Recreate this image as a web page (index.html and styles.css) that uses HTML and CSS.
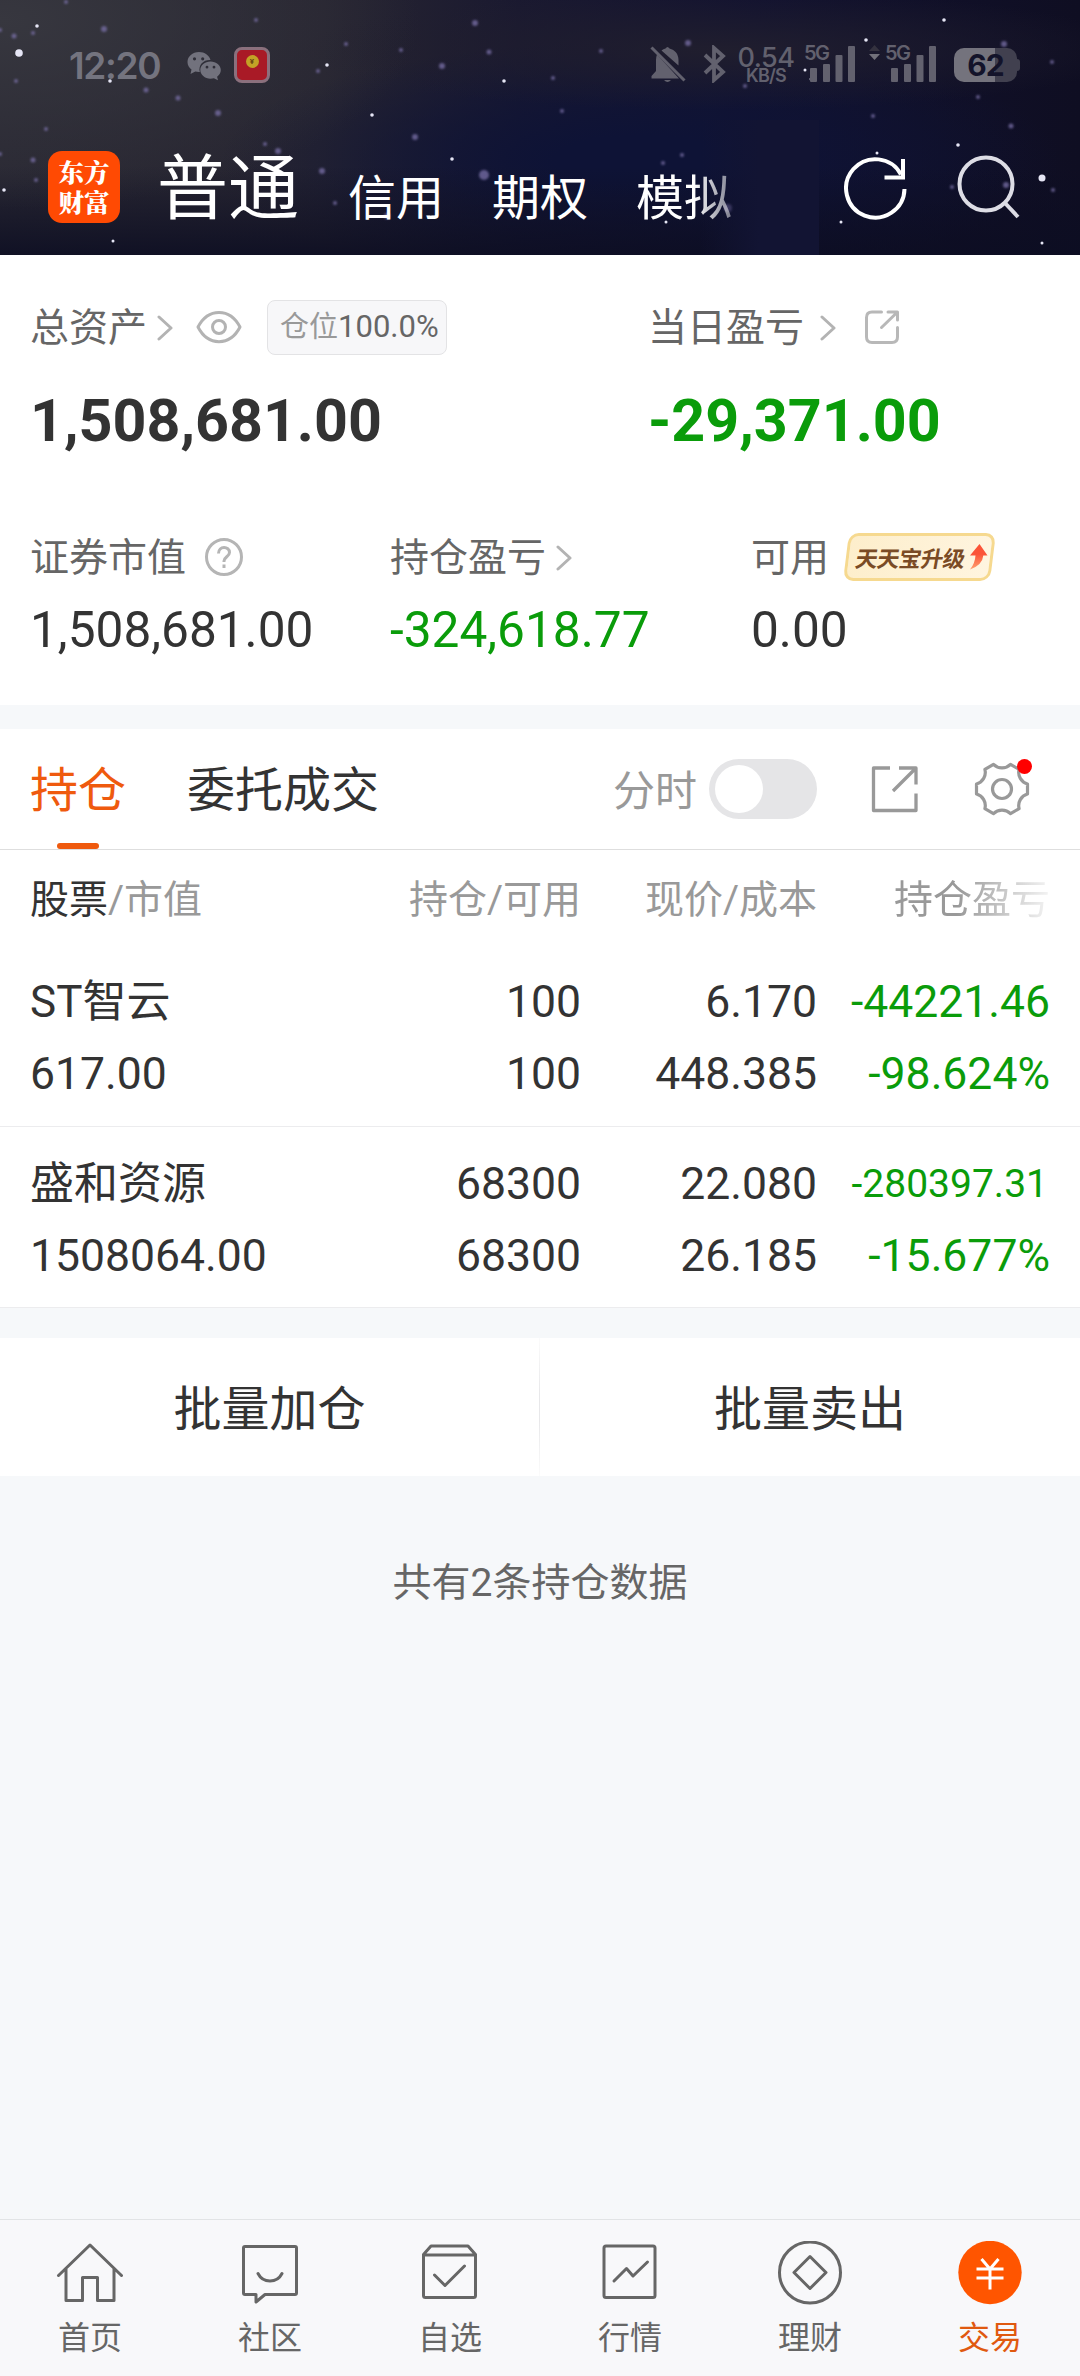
FILE: index.html
```html
<!DOCTYPE html>
<html lang="zh-CN">
<head>
<meta charset="utf-8">
<title>交易</title>
<link rel="stylesheet" href="styles.css">
</head>
<body>
<div class="app">
  <header class="header">
    <svg class="sky" viewBox="0 0 1080 255" aria-hidden="true">
      <defs>
        <linearGradient id="fade" x1="0" x2="1"><stop offset="0" stop-color="#121433" stop-opacity="0"/><stop offset=".5" stop-color="#121433"/></linearGradient>
        <filter id="soft"><feGaussianBlur stdDeviation="1"/></filter>
      </defs>
      <g fill="#e6e6f5">
        <circle cx="19" cy="53" r="3.800"/><circle cx="37" cy="26" r="1.800"/><circle cx="110" cy="81" r="1.800"/><circle cx="327" cy="65" r="1.800"/>
        <circle cx="372" cy="115" r="1.800"/><circle cx="504" cy="81" r="1.800"/><circle cx="452" cy="159" r="1.800"/><circle cx="4" cy="190" r="1.800"/>
        <circle cx="944" cy="20" r="1.800"/><circle cx="866" cy="40" r="1.800"/><circle cx="805" cy="70" r="1.500"/><circle cx="811" cy="79" r="1.500"/>
        <circle cx="958" cy="145" r="1.800"/><circle cx="841" cy="222" r="1.500"/><circle cx="1042" cy="178" r="3.500"/><circle cx="1042" cy="243" r="1.500"/>
        <circle cx="877" cy="153" r="1.500"/><circle cx="666" cy="222" r="1.500"/><circle cx="113" cy="241" r="1.500"/>
      </g>
      <g fill="#7a70a8" fill-opacity=".75" filter="url(#soft)">
        <circle cx="104" cy="29" r="3"/><circle cx="14" cy="36" r="2.500"/><circle cx="33" cy="33" r="2"/><circle cx="16" cy="81" r="2"/>
        <circle cx="146" cy="90" r="2.500"/><circle cx="178" cy="98" r="2.500"/><circle cx="218" cy="113" r="3"/><circle cx="46" cy="129" r="2"/>
        <circle cx="33" cy="160" r="2.500"/><circle cx="36" cy="180" r="2"/><circle cx="278" cy="151" r="3"/><circle cx="265" cy="144" r="2"/>
        <circle cx="346" cy="44" r="2"/><circle cx="401" cy="50" r="2"/><circle cx="442" cy="66" r="3"/><circle cx="475" cy="23" r="3"/>
        <circle cx="489" cy="52" r="2.500"/><circle cx="484" cy="175" r="5"/><circle cx="415" cy="137" r="3"/><circle cx="322" cy="171" r="3"/>
        <circle cx="335" cy="203" r="2"/><circle cx="66" cy="2" r="2"/><circle cx="256" cy="20" r="2"/><circle cx="318" cy="71" r="2"/>
        <circle cx="688" cy="43" r="3"/><circle cx="601" cy="51" r="2"/><circle cx="553" cy="78" r="2"/><circle cx="745" cy="86" r="2"/>
        <circle cx="562" cy="111" r="2"/><circle cx="682" cy="155" r="2"/><circle cx="663" cy="163" r="2"/><circle cx="728" cy="208" r="4"/>
        <circle cx="1004" cy="44" r="3"/><circle cx="978" cy="97" r="2"/><circle cx="1011" cy="126" r="2.500"/><circle cx="873" cy="116" r="2"/>
        <circle cx="1006" cy="185" r="3"/><circle cx="1053" cy="190" r="2"/><circle cx="952" cy="187" r="2"/><circle cx="1052" cy="62" r="2"/>
        <circle cx="0" cy="154" r="2"/><circle cx="0" cy="30" r="2"/><circle cx="387" cy="216" r="3"/>
      </g>
      <rect x="700" y="120" width="119" height="135" fill="url(#fade)"/>
    </svg>
    <div class="status">
      <span class="clock">12:20</span>
      <svg class="wechat" width="34" height="30" viewBox="0 0 34 30"><path fill="#72727d" fill-rule="evenodd" d="M12 1C5.500 1 .5 5.500 .5 11c0 3 1.500 5.800 4 7.600L3.500 23l4.800-2.500c1.200.3 2.400.5 3.700.5h.8C11 13.500 17 8.500 23.500 9 22.300 4.300 17.600 1 12 1ZM7.500 6.200a1.600 1.600 0 1 1 0 3.200 1.600 1.600 0 0 1 0-3.200Zm8.200 0a1.600 1.600 0 1 1 0 3.200 1.600 1.600 0 0 1 0-3.200Z"/><path fill="#72727d" fill-rule="evenodd" d="M23.500 10.500c-5.700 0-10.200 3.800-10.200 8.600s4.500 8.600 10.200 8.600c1.200 0 2.300-.2 3.400-.5l4.100 2-.9-3.500c2.300-1.600 3.700-3.900 3.700-6.600 0-4.800-4.600-8.600-10.300-8.600Zm-3.500 4.300a1.400 1.400 0 1 1 0 2.800 1.400 1.400 0 0 1 0-2.800Zm7 0a1.400 1.400 0 1 1 0 2.800 1.400 1.400 0 0 1 0-2.800Z"/></svg>
      <span class="packet"><span class="coin">¥</span></span>
      <svg class="bell" width="36" height="36" viewBox="0 0 36 36"><path fill="#62616e" d="M15.500 2.500q2-3 4 0C25 4 28.500 8 28.500 14v5.500L11.500 4.500q1.800-1.400 4-2ZM7 8.500 29 32.500H1.500V30L6 25V14q0-3 1-5.500ZM14 34h7q-3.500 4-7 0Z"/><path stroke="#62616e" stroke-width="3" d="m1.500 1.500 33 33"/></svg>
      <svg class="bt" width="23" height="38" viewBox="0 0 23 38"><path fill="none" stroke="#62616e" stroke-width="3.800" d="m2 10 18 17-9 8V3l9 8L2 28"/></svg>
      <span class="speed"><b>0.54</b><i>KB/S</i></span>
      <span class="signal"><span class="g5">5G</span><svg width="46" height="38" viewBox="0 0 46 38"><g fill="#62616e"><rect x="0" y="23" width="7" height="14" rx="1"/><rect x="13" y="19" width="7" height="18" rx="1"/><rect x="25.500" y="10" width="7" height="27" rx="1"/><rect x="38" y="1" width="7" height="36" rx="1"/></g></svg></span>
      <svg class="updown" width="11" height="16" viewBox="0 0 11 16"><path fill="#34323f" d="m0 6 5.500-6L11 6z"/><path fill="#72717b" d="m0 9 5.500 6L11 9z"/></svg>
      <span class="signal second"><span class="g5">5G</span><svg width="46" height="38" viewBox="0 0 46 38"><g fill="#62616e"><rect x="0" y="23" width="7" height="14" rx="1"/><rect x="13" y="19" width="7" height="18" rx="1"/><rect x="25.500" y="10" width="7" height="27" rx="1"/><rect x="38" y="1" width="7" height="36" rx="1"/></g></svg></span>
      <span class="battery">62</span>
    </div>
    <nav class="nav">
      <span class="logo"><span>东方</span><span>财富</span></span>
      <span class="nav-main">普通</span>
      <span class="nav-item">信用</span>
      <span class="nav-item">期权</span>
      <span class="nav-item faded">模拟</span>
      <svg class="refresh" width="64" height="66" viewBox="0 0 64 66"><path fill="none" stroke="#fff" stroke-width="4" d="M60.500 34A29.200 29.200 0 1 1 57 19.500"/><path fill="none" stroke="#fff" stroke-width="4" d="M59 4v18.500H40.500"/></svg>
      <svg class="search" width="64" height="66" viewBox="0 0 64 66"><g fill="none" stroke="#dddde5" stroke-width="4"><circle cx="29" cy="29" r="26.500"/><path d="m48 48 13 14"/></g></svg>
    </nav>
  </header>

  <section class="summary">
    <div class="top-grid">
      <div>
        <div class="label">总资产
          <svg class="chev c1" width="16" height="26" viewBox="0 0 16 26"><path d="m2 2 12 11L2 24"/></svg>
          <svg class="eye" width="46" height="34" viewBox="0 0 46 34"><g fill="none" stroke="#b3b3b3" stroke-width="3"><path stroke-linejoin="round" d="M2 17C12-2.500 34-2.500 44 17 34 36.500 12 36.500 2 17Z"/><circle cx="23" cy="17" r="6.500"/></g></svg>
          <span class="position">仓位<em>100.0%</em></span>
        </div>
        <div class="big">1,508,681.00</div>
      </div>
      <div>
        <div class="label">当日盈亏
          <svg class="chev c2" width="16" height="26" viewBox="0 0 16 26"><path d="m2 2 12 11L2 24"/></svg>
          <svg class="share-sm" width="36" height="36" viewBox="0 0 36 36"><path fill="none" stroke="#b8b8b8" stroke-width="3" stroke-linecap="round" stroke-linejoin="round" d="M17.500 3H8Q2.500 3 2.500 8.500V28q0 5.500 5.500 5.500h20q5.500 0 5.500-5.500V18.500M24 3h9.500v8M33 3.500 17.500 18.500"/></svg>
        </div>
        <div class="big green">-29,371.00</div>
      </div>
    </div>
    <div class="sub-grid">
      <div>
        <div class="label">证券市值
          <svg class="help" width="40" height="40" viewBox="0 0 40 40"><g fill="none" stroke="#b5b5b5" stroke-width="3"><circle cx="20" cy="20" r="17.500"/><path d="M14.500 16.500c0-8 11-7.500 11-1 0 4-5.500 4.500-5.500 8.500v1M20 27.500v3.500"/></g></svg>
        </div>
        <div class="value">1,508,681.00</div>
      </div>
      <div>
        <div class="label">持仓盈亏
          <svg class="chev c3" width="16" height="26" viewBox="0 0 16 26"><path d="m2 2 12 11L2 24"/></svg>
        </div>
        <div class="value green">-324,618.77</div>
      </div>
      <div>
        <div class="label">可用
          <span class="promo"><span class="promo-text">天天宝升级</span><svg width="20" height="26" viewBox="0 0 20 26"><defs><linearGradient id="up" x1="0" x2="0" y1="0" y2="1"><stop offset=".4" stop-color="#fb5438"/><stop offset="1" stop-color="#ffa070"/></linearGradient></defs><path fill="url(#up)" d="m11.500 0 8 11.500h-4.200Q14.500 21 2 25.500 7 19.500 7.500 11.500H2Z"/></svg></span>
        </div>
        <div class="value">0.00</div>
      </div>
    </div>
  </section>

  <section class="holdings">
    <div class="tabs">
      <span class="tab active">持仓</span>
      <span class="tab">委托成交</span>
      <span class="minute">分时</span>
      <span class="toggle"><span class="knob"></span></span>
      <svg class="share" width="48" height="48" viewBox="0 0 48 48"><path fill="none" stroke="#999" stroke-width="3.300" stroke-linejoin="round" d="M19 3H2.500V45.500H45V28.500M28 3H45V19.500M44.500 3.500 22 26"/></svg>
      <span class="gear"><svg width="56" height="56" viewBox="-28 -28 56 56"><g fill="none" stroke="#999" stroke-width="3.200" stroke-linejoin="round"><path d="M25.500-5V5A12 12 0 0 0 17.100 19.600L8.500 24.600A12 12 0 0 0-8.500 24.600L-17.100 19.600A12 12 0 0 0-25.500 5V-5A12 12 0 0 0-17.100-19.600L-8.500-24.600A12 12 0 0 0 8.500-24.600L17.100-19.600A12 12 0 0 0 25.500-5Z"/><circle r="9.500"/></g></svg><span class="dot"></span></span>
    </div>
    <div class="row head"><span><b>股票</b>/市值</span><span>持仓/可用</span><span>现价/成本</span><span class="fade-head">持仓盈亏</span></div>
    <div class="row"><span class="name">ST智云</span><span>100</span><span>6.170</span><span class="green">-44221.46</span><span>617.00</span><span>100</span><span>448.385</span><span class="green">-98.624%</span></div>
    <div class="row"><span class="name">盛和资源</span><span>68300</span><span>22.080</span><span class="green small">-280397.31</span><span>1508064.00</span><span>68300</span><span>26.185</span><span class="green">-15.677%</span></div>
  </section>

  <div class="actions"><span>批量加仓</span><span>批量卖出</span></div>
  <p class="count">共有2条持仓数据</p>

  <footer class="tabbar">
    <div class="item"><svg width="72" height="66" viewBox="0 0 72 66"><path d="M4.500 34.500 36 4l31.500 30.500M12 28v31.500h16.500v-23h15v23H60V28"/></svg>首页</div>
    <div class="item"><svg width="72" height="66" viewBox="0 0 72 66"><path d="M11 5.500H61q1.500 0 1.500 1.500V52q0 1.500-1.500 1.500H31L22 61V53.500H11Q9.500 53.500 9.500 52V7q0-1.500 1.500-1.500ZM24 32.500c5 10 19 10 24 0"/></svg>社区</div>
    <div class="item"><svg width="72" height="66" viewBox="0 0 72 66"><path d="M9.500 13.500 17 5h37l7.500 8.500V54.500q0 2-2 2h-48q-2 0-2-2ZM9.500 14h52M20.500 34 31 44.500 50.500 25"/></svg>自选</div>
    <div class="item"><svg width="72" height="66" viewBox="0 0 72 66"><rect x="10" y="5" width="51" height="51.500" rx="2"/><path d="m20 40 12.500-12.500L39 35l14.500-14"/></svg>行情</div>
    <div class="item"><svg width="72" height="66" viewBox="0 0 72 66"><circle cx="36" cy="31.500" r="30.500"/><path d="M36 15.500 52 31.500 36 47.500 20 31.500Z"/></svg>理财</div>
    <div class="item on"><svg width="72" height="66" viewBox="0 0 72 66"><circle class="fill" cx="36" cy="31.500" r="31.700"/><path class="yen" d="M27.500 18 36 28l8.500-10M36 28V48.500M22.500 28h27M22.500 37h27"/></svg>交易</div>
  </footer>
</div>
</body>
</html>
```
FILE: styles.css
```css
* { box-sizing: border-box; }
body {
  margin: 0;
  background: #f6f8fa;
  color: #333;
  font-family: Roboto, "Noto Sans CJK SC", sans-serif;
}
.app { width: 1080px; height: 2376px; display: flex; flex-direction: column; }
svg { display: block; flex: none; }
span { white-space: nowrap; }
.green { color: #0a9c0a; }

/* header */
.header {
  position: relative;
  height: 255px;
  flex: none;
  overflow: hidden;
  background:
    radial-gradient(ellipse 420px 190px at 0 20px, #37373f 0%, rgba(55,55,63,0) 100%),
    linear-gradient(180deg, rgba(14,14,36,0) 65%, rgba(12,13,34,.85) 100%),
    radial-gradient(ellipse 420px 60px at 720px 50px, #201e2e 0%, rgba(32,30,46,0) 100%),
    radial-gradient(ellipse 420px 120px at 640px 160px, #0e1336 20%, rgba(14,19,54,0) 100%),
    linear-gradient(90deg, #292833 0%, #272531 30%, #1a1930 48%, #121230 70%, #0f0e22 100%);
}
.sky { position: absolute; inset: 0; width: 1080px; height: 255px; }
.status { position: relative; height: 130px; display: flex; align-items: center; padding-left: 69px; }
.clock { width: 118px; font: 600 37px/40px Inter, sans-serif; color: #74747f; letter-spacing: -1.300px; margin-top: 1px; }
.wechat { margin-top: 1px; }
.packet {
  width: 36px; height: 36px; margin-left: 13px;
  border: 3px solid #8b707d; border-radius: 8px; background: #a91a26;
  display: flex; justify-content: center; padding-top: 5px;
}
.coin { width: 13px; height: 13px; border-radius: 50%; background: #c3a226; color: #66420f; font: 700 8px/13px Roboto, sans-serif; text-align: center; }
.bell { margin-left: 380px; margin-top: -2px; }
.bt { margin-left: 17px; margin-top: -2px; }
.speed { width: 58px; margin-left: 11px; margin-top: 1px; color: #62616e; font-family: Inter, sans-serif; text-align: center; display: flex; flex-direction: column; }
.speed b { font-weight: 500; font-size: 27px; line-height: 21px; letter-spacing: -.5px; }
.speed i { font-style: normal; font-weight: 600; font-size: 18px; line-height: 16px; letter-spacing: -.8px; }
.signal { position: relative; margin: -2px 0 0 9px; padding-left: 6px; }
.g5 { position: absolute; left: 0; top: -3px; font: 600 20px/22px Inter, sans-serif; letter-spacing: -1.500px; color: #62616e; }
.updown { margin: -24px 0 0 13px; }
.signal.second { margin-left: 5px; }
.battery {
  position: relative; width: 63px; height: 34px; margin-left: 17px; border-radius: 10px;
  background: linear-gradient(90deg, #74737d 65%, #41404f 65%);
  color: #13132a; font: 700 30px/34px Inter, sans-serif; letter-spacing: -1px; text-align: center;
}
.battery::after { content: ""; position: absolute; left: 63px; top: 11px; width: 3px; height: 12px; border-radius: 0 3px 3px 0; background: #41404f; }
.nav { position: relative; height: 125px; display: flex; padding-left: 48px; }
.logo {
  width: 72px; height: 72px; margin-top: 21px; border-radius: 14px;
  background: #ff4a03; color: #fff;
  font: 900 25.500px/30px "Noto Serif CJK SC", "Noto Sans CJK SC", serif;
  display: flex; flex-direction: column; align-items: center; padding-top: 5px;
}
.nav-main { margin-left: 37px; width: 143px; font-size: 71px; line-height: 90px; color: #fff; margin-top: 14px; }
.nav-item { margin-left: 48px; width: 96px; font-size: 48px; line-height: 60px; color: #fff; margin-top: 39px; }
.nav-item.faded { -webkit-mask-image: linear-gradient(90deg, #000 60%, rgba(0,0,0,.45) 100%); mask-image: linear-gradient(90deg, #000 60%, rgba(0,0,0,.45) 100%); }
.refresh { margin: 25px 0 0 112px; }
.search { margin: 25px 0 0 49px; }

/* summary */
.summary { height: 450px; flex: none; background: #fff; padding-left: 30px; }
.top-grid { display: grid; grid-template-columns: 618px 1fr; padding-top: 43px; height: 246px; }
.sub-grid { display: grid; grid-template-columns: 360px 361px 1fr; padding-top: 27px; }
.label { display: flex; align-items: center; height: 60px; font-size: 39px; line-height: 60px; color: #666; }
.chev { fill: none; stroke: #b3b3b3; stroke-width: 3; stroke-linecap: round; stroke-linejoin: round; }
.c1 { margin-left: 10px; }
.c2 { margin-left: 16px; }
.c3 { margin-left: 10px; }
.eye { margin-left: 23px; margin-top: -2px; }
.position {
  margin-left: 25px; width: 180px; height: 55px; border: 1px solid #e3e3e5; border-radius: 8px;
  background: #f7f7f9; color: #999; font-size: 29px; line-height: 52px; padding-left: 12px; margin-top: -2px;
}
.position em { font-style: normal; color: #666; font-size: 31px; }
.big { font-size: 59.200px; font-weight: 700; line-height: 80px; margin-top: 23px; }
.share-sm { margin-left: 28px; margin-top: -2px; }
.help { margin-left: 18px; margin-top: -2px; }
.value { font-size: 49.600px; line-height: 60px; margin-top: 12px; }
.promo {
  position: relative; z-index: 0; margin: -3px 0 0 17px; width: 147px; height: 48px;
  display: flex; align-items: center; padding-left: 10px; gap: 3px;
}
.promo::before {
  content: ""; position: absolute; inset: 0; z-index: -1; transform: skewX(-7deg);
  border: 3px solid #f6d98f; border-radius: 10px; background: linear-gradient(100deg, #fdeecb, #fff5e0);
}
.promo-text { font: 700 22.300px/40px "Noto Sans CJK SC", sans-serif; color: #7a4b25; transform: skewX(-10deg); letter-spacing: -.5px; }

/* holdings */
.holdings { margin-top: 24px; background: #fff; flex: none; height: 579px; border-bottom: 1px solid #ececee; }
.tabs { display: flex; align-items: center; height: 121px; border-bottom: 1px solid #dedede; padding-left: 30px; }
.tab { position: relative; height: 120px; font-size: 48px; line-height: 124px; margin-right: 61px; }
.tab.active { color: #ef5a0e; }
.tab.active::after { content: ""; position: absolute; left: 27px; bottom: 0; width: 42px; height: 6px; border-radius: 3px; background: #ef5a0e; }
.minute { margin: -4px 0 0 173px; width: 96px; font-size: 42px; color: #999; }
.toggle { width: 108px; height: 60px; border-radius: 30px; background: #e5e5e7; padding: 6px; }
.knob { display: block; width: 48px; height: 48px; border-radius: 50%; background: #fff; }
.share { margin-left: 54px; }
.gear { position: relative; margin-left: 55px; }
.dot { position: absolute; left: 43px; top: -2px; width: 15px; height: 15px; border-radius: 50%; background: #f00; }
.row {
  display: grid; grid-template-columns: 269px 282px 236px 233px; grid-auto-rows: 72px;
  padding: 21px 30px 0 30px; height: 181px; font-size: 44.500px; line-height: 72px;
  text-align: right; border-top: 1px solid #ececee;
}
.row > :nth-child(4n + 1) { text-align: left; }
.row.head { height: 102px; padding-top: 14px; font-size: 39px; color: #999; border: 0; }
.row.head b { font-weight: 400; color: #333; }
.row.head + .row { height: 174px; padding-top: 14px; border: 0; }
.row .name { font-size: 44px; }
.row .small { font-size: 39px; padding-right: 2px; }
.fade-head { -webkit-mask-image: linear-gradient(90deg, #000 60%, rgba(0,0,0,.1) 100%); mask-image: linear-gradient(90deg, #000 60%, rgba(0,0,0,.1) 100%); }

.actions {
  margin-top: 30px; height: 138px; flex: none; display: grid; grid-template-columns: 539px 540px; gap: 1px;
  font-size: 48px; line-height: 143px; text-align: center;
  background: linear-gradient(#fbfbfb, #e8e8ea 40%, #e8e8ea 60%, #fbfbfb) 539px 0 / 1px 100% no-repeat #fff;
}
.count { margin: 77px 0 0; text-align: center; font-size: 39px; line-height: 60px; color: #666; }

/* bottom tab bar */
.tabbar { margin-top: auto; height: 157px; display: grid; grid-template-columns: repeat(6, 1fr); border-top: 1px solid #e2e4e6; background: #f8f8fa; }
.item { display: flex; flex-direction: column; align-items: center; padding-top: 21px; font-size: 32px; line-height: 46px; color: #666; }
.item svg { fill: none; stroke: #666; stroke-width: 3; stroke-linejoin: round; stroke-linecap: round; margin-bottom: 8px; }
.item.on { color: #e0590f; }
.item .fill { fill: #ff5500; stroke: none; }
.item .yen { stroke: #fff; stroke-linecap: butt; }
```
